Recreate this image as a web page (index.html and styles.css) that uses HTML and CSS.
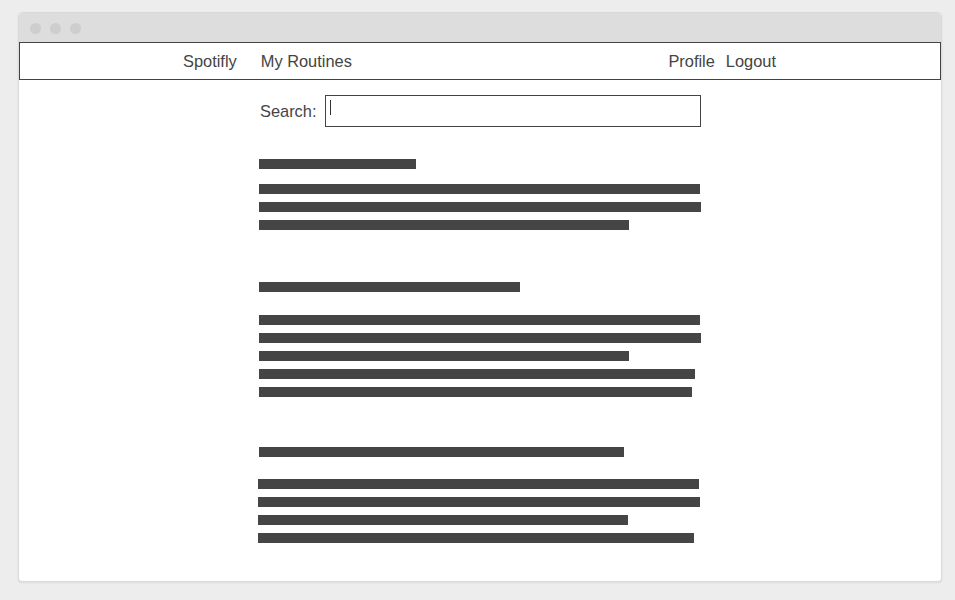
FILE: index.html
```html
<!DOCTYPE html>
<html lang="en">
<head>
<meta charset="utf-8">
<title>Spotifly - Routines</title>
<link rel="stylesheet" href="styles.css">
</head>
<body>
<div class="window">
  <div class="titlebar">
    <span class="dot"></span><span class="dot"></span><span class="dot"></span>
  </div>
  <nav class="nav">
    <div class="nav-inner">
      <div class="nav-group left">
        <a class="nav-link" href="#">Spotifly</a>
        <a class="nav-link" href="#">My Routines</a>
      </div>
      <div class="nav-group right">
        <a class="nav-link" href="#">Profile</a>
        <a class="nav-link" href="#">Logout</a>
      </div>
    </div>
  </nav>
  <main class="main">
    <div class="search-row">
      <label class="search-label">Search:</label>
      <div class="search-input"><span class="caret"></span></div>
    </div>

    <section class="routine s1">
      <div class="bar heading" style="width:157px"></div>
      <div class="lines">
        <div class="bar" style="width:441px"></div>
        <div class="bar" style="width:442px"></div>
        <div class="bar" style="width:370px"></div>
      </div>
    </section>

    <section class="routine s2">
      <div class="bar heading" style="width:261px"></div>
      <div class="lines">
        <div class="bar" style="width:441px"></div>
        <div class="bar" style="width:442px"></div>
        <div class="bar" style="width:370px"></div>
        <div class="bar" style="width:436px"></div>
        <div class="bar" style="width:433px"></div>
      </div>
    </section>

    <section class="routine s3">
      <div class="bar heading" style="width:365px"></div>
      <div class="lines shift">
        <div class="bar" style="width:441px"></div>
        <div class="bar" style="width:442px"></div>
        <div class="bar" style="width:370px"></div>
        <div class="bar" style="width:436px"></div>
      </div>
    </section>
  </main>
</div>
</body>
</html>
```

FILE: styles.css
```css
* { box-sizing: border-box; }

html, body {
  margin: 0;
  padding: 0;
}

body {
  background: #ededed;
  font-family: "Liberation Sans", Arial, sans-serif;
  color: #444;
  padding: 12px 0 0 18px;
  width: 955px;
  height: 600px;
  overflow: hidden;
}

.window {
  width: 924px;
  height: 570px;
  background: #fff;
  border: 1px solid #dadada;
  border-radius: 4px;
  box-shadow: 0 1px 2px rgba(0, 0, 0, 0.08);
  overflow: hidden;
}

.titlebar {
  height: 29px;
  background: #dddddd;
  display: flex;
  align-items: center;
  gap: 9px;
  padding-left: 11px;
  padding-top: 1px;
}

.dot {
  width: 11px;
  height: 11px;
  border-radius: 50%;
  background: #cecece;
}

.nav {
  height: 38px;
  border: 1px solid #444;
  display: flex;
  align-items: center;
}

.nav-inner {
  width: 594px;
  margin: 0 auto;
  display: flex;
  justify-content: space-between;
  align-items: center;
}

.nav-group {
  display: flex;
  align-items: center;
}

.nav-group.left { gap: 24px; }
.nav-group.right { gap: 11px; padding-right: 1px; }

.nav-link {
  color: #444;
  text-decoration: none;
  font-size: 16.4px;
  line-height: 20px;
}

.main {
  width: 442px;
  margin: 0 auto;
  padding-top: 15px;
}

.search-row {
  display: flex;
  align-items: center;
  height: 32px;
}

.search-label {
  font-size: 16.4px;
  line-height: 20px;
  color: #444;
  padding-left: 1px;
}

.search-input {
  margin-left: auto;
  width: 376px;
  height: 32px;
  border: 1px solid #444;
  padding: 4px 0 0 4px;
}

.caret {
  display: block;
  width: 1px;
  height: 15px;
  background: #333;
}

.bar {
  height: 10px;
  background: #454545;
}

.lines {
  display: flex;
  flex-direction: column;
  gap: 8px;
}

.lines.shift { margin-left: -1px; }

.s1 { margin-top: 32px; }
.s1 .heading { margin-bottom: 15px; }

.s2 { margin-top: 52px; }
.s2 .heading { margin-bottom: 23px; }

.s3 { margin-top: 50px; }
.s3 .heading { margin-bottom: 22px; }
```
